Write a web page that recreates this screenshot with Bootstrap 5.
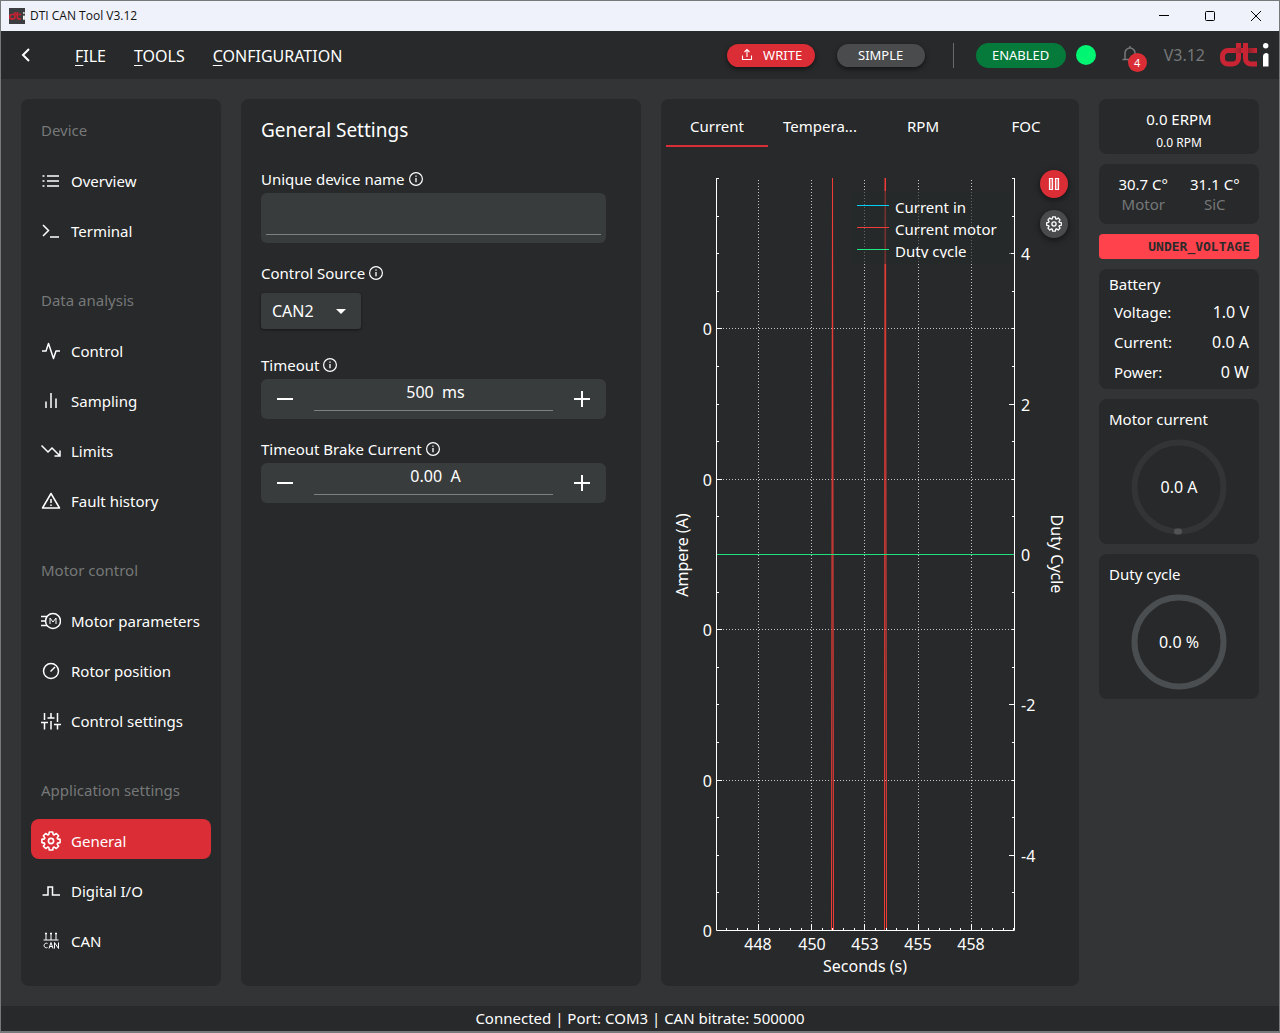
<!DOCTYPE html>
<html lang="en" data-bs-theme="dark">
<head>
<meta charset="utf-8">
<meta name="viewport" content="width=device-width, initial-scale=1">
<title>DTI CAN Tool V3.12</title>
<link href="https://cdn.jsdelivr.net/npm/bootstrap@5.3.0/dist/css/bootstrap.min.css" rel="stylesheet">
<style>
:root{--panel:#27292a;--canvas:#333436;--field:#393c3d;--red:#da2d36;--muted:#767879}
body{font-family:"Noto Sans","DejaVu Sans",sans-serif;font-size:15px;line-height:20px;color:#fff;background:var(--canvas)}
svg{flex:none;display:block}
.ico{fill:none;stroke:currentColor;stroke-width:1.5}
.app-window{min-height:100vh;border:1px solid #77787a;border-bottom-width:2px}
.title-strip{height:30px;background:#eff2fa;color:#111;font-family:"Open Sans","Noto Sans",sans-serif;font-size:12px;padding:0 0 0 8px}
.title-strip .win-btn{border:0;background:none;color:#000;width:46px;height:30px;padding:0;display:flex;align-items:center;justify-content:center}
.title-strip .app-name{padding-left:5px}
.topbar{height:48px;background:var(--panel);padding:0 10px 0 14px}
.back-btn{border:0;background:none;color:#fff;padding:4px;margin-right:40px}
.menu-link{color:#fff;text-decoration:none;font-size:16px}
.menu-gap{gap:28px;padding-top:1px}
.menu-link u{text-underline-offset:3px}
.pill{border:0;border-radius:13px;color:#fff;font-size:13px;line-height:23px;height:23px;width:88px;padding:0;box-shadow:0 2px 5px #0008}
.pill-write{background:var(--red);margin-right:22px}
.pill-simple{background:#4a4b4c}
.pill-on{background:#057a3a;width:90px;height:25px;line-height:25px;box-shadow:none;margin-right:10px}
.rule-v{width:1px;height:25px;background:#67696a;margin:0 22px 0 28px}
.dot-ok{width:20px;height:20px;border-radius:50%;background:#00f573;margin-right:26px}
.bell-btn{border:0;background:none;color:#77797a;padding:0;width:18px;height:20px;margin-right:24px}
.bell-count{left:6px;top:8px;width:19px;height:19px;border-radius:50%;background:var(--red);color:#fff;font-size:11px;line-height:19px}
.ver{color:var(--muted);font-size:16px;margin-right:15px}
.work{padding:20px;gap:20px}
.panel{background:var(--panel);border-radius:8px}
.side{flex:0 0 200px;padding:10px 10px 25px}
.side-head{color:var(--muted);height:40px;line-height:42px;padding-left:10px;margin:0 0 10px;font-size:15px;font-weight:400}
.side-list{display:flex;flex-direction:column;gap:10px;margin-bottom:30px}
.side-list:last-child{margin-bottom:0}
.side-link{display:flex;align-items:center;gap:10px;height:40px;padding:3px 10px 0;border-radius:8px;color:#fff;text-decoration:none}
.side-link.active{background:var(--red)}
.settings{flex:0 0 400px;padding:19px 35px 20px 20px}
.settings h1{font-size:19px;line-height:24px;margin:0 0 25px;font-weight:400}
.field-label{height:24px;display:flex;align-items:center;gap:3px;margin-bottom:2px;padding-bottom:1px}
.field-box{background:var(--field);border-radius:6px;padding:5px}
.field-box input,.stepper input{border:0;border-bottom:1px solid #7c8080;background:none;color:#fff;border-radius:0;outline:0}
.field-box input{display:block;width:100%;height:37px;margin-bottom:3px}
.mb-field{margin-bottom:18px}
.source-wrap{width:100px;height:36px;margin-bottom:24px;margin-top:8px}
.source-wrap select{appearance:none;width:100%;height:36px;border:0;border-radius:3px;background:var(--field);color:#fff;font-size:16px;padding:0 11px;box-shadow:0 1px 3px #0007}
.source-wrap::after{content:"";position:absolute;right:15px;top:16px;border:5px solid transparent;border-top-color:#fff;border-bottom:0;pointer-events:none}
.stepper{background:var(--field);border-radius:6px;height:40px;padding:0 7px}
.stepper button{border:0;background:none;color:#fff;width:34px;height:40px;padding:0;display:flex;align-items:center;justify-content:center}
.stepper input{flex:1;min-width:0;height:32px;font-size:16px;text-align:center;padding:0 0 5px 4px;margin:0 12px}
.chart-panel{flex:1 1 418px;min-width:0}
.tab-row{padding:5px 2px 0 5px;gap:1px}
.tab-row .nav-link{flex:1 1 0;color:#fff;background:none;padding:12px 0;height:43px;line-height:20px;border:0;border-bottom:2px solid transparent;border-radius:0;text-align:center}
.tab-row .nav-link.active{border-bottom-color:var(--red)}
.plot{width:100%;height:auto;margin-top:1px}
.plot text{fill:#fff;font-size:16px}
.plot .key text{font-size:15px}
.plot-tools{position:absolute;right:11px;top:71px;display:flex;flex-direction:column;gap:12px}
.round-btn{width:28px;height:28px;border:0;border-radius:50%;padding:0;display:flex;align-items:center;justify-content:center;color:#fff;background:#4a4b4c;box-shadow:0 2px 6px #0008}
.round-btn.hot{background:var(--red)}
.gauges{flex:0 0 160px;display:flex;flex-direction:column;gap:10px}
.speed-box{height:55px;padding-top:10px}
.tiny{font-size:12px;line-height:28px}
.temp-box{height:60px;padding:10px 14px;gap:22px}
.dim{color:var(--muted)}
.fault{background:#ff424c;color:#2c2a2b;border-radius:4px;height:25px;font:bold 13px/26px "DejaVu Sans Mono",monospace;text-align:right;padding-right:9px}
.batt{height:120px;padding:5px 10px 0}
.batt table{width:100%;margin-top:3px}
.batt td,.batt th{height:30px;padding:0 0 0 5px;font-weight:400;font-size:15px}
.batt td{font-size:16px}
.dial-box{height:145px;padding:10px 10px 0}
.dial-box svg{margin:10px auto 0}
.dial-box text{fill:#fff;font-size:16px;text-anchor:middle}
.status{height:25px;line-height:25px;background:var(--panel);text-align:center}
</style>
<script src="https://cdn.jsdelivr.net/npm/bootstrap@5.3.0/dist/js/bootstrap.bundle.min.js"></script>
</head>
<body>
<svg width="0" height="0" class="position-absolute" aria-hidden="true">
  <defs>
    <linearGradient id="fold"><stop offset="0" stop-color="#c92434"/><stop offset=".6" stop-color="#7d2029"/><stop offset="1" stop-color="#c92434"/></linearGradient>
    <symbol id="i-info" viewBox="0 0 16 16"><circle cx="8" cy="8" r="6.4" fill="none" stroke="currentColor" stroke-width="1.2"/><path d="M8 7v4.2M8 4.4v1.3" fill="none" stroke="currentColor" stroke-width="1.3"/></symbol>
    <symbol id="i-gear" viewBox="0 0 20 20"><path d="M8.3 1h3.4l.5 2.5 1 .4 2.1-1.4 2.3 2.3-1.4 2.1.4 1 2.5.5v3.2l-2.5.5-.4 1 1.4 2.1-2.3 2.3-2.1-1.4-1 .4-.5 2.5H8.3l-.5-2.5-1-.4-2.1 1.4-2.3-2.3 1.4-2.1-.4-1-2.5-.5V8.4l2.5-.5.4-1-1.4-2.1 2.3-2.3 2.1 1.4 1-.4z" fill="none" stroke="currentColor" stroke-width="1.6" stroke-linejoin="round"/><circle cx="10" cy="10" r="2.6" fill="none" stroke="currentColor" stroke-width="1.6"/></symbol>
    <symbol id="i-dti" viewBox="0 0 49 24">
      <path d="M18.500 0v15a6 6 0 0 1-6 6H8a5.500 5.500 0 0 1-5.500-5.500V13A5.500 5.500 0 0 1 8 7.500h10" fill="none" stroke="#c92434" stroke-width="5"/>
      <path d="M21 7.500h16M25.500 0v15.500a5.500 5.500 0 0 0 5.500 5.500h6" fill="none" stroke="#c92434" stroke-width="5"/>
      <path d="M13 5h8v5h-8zM28 5h8v5h-8z" fill="url(#fold)"/>
      <path d="M43 13a3 3 0 0 1 5.500-1.500V23.500H43z" fill="currentColor"/><circle cx="45.700" cy="2.700" r="2.700" fill="currentColor"/>
    </symbol>
  </defs>
</svg>
<div class="app-window d-flex flex-column">
  <div class="title-strip d-flex align-items-center">
    <svg width="16" height="16" viewBox="0 0 16 16" color="#fff"><path fill="#3c3d40" d="M0 0h16v16H0z"/><use href="#i-dti" x="0" y="4" width="16" height="8"/></svg>
    <span class="app-name me-auto">DTI CAN Tool V3.12</span>
    <button class="win-btn" aria-label="Minimize"><svg width="10" height="10" viewBox="0 0 10 10"><path d="M0 4.500h10" stroke="#000"/></svg></button>
    <button class="win-btn" aria-label="Maximize"><svg width="10" height="10" viewBox="0 0 10 10"><rect x=".5" y=".5" width="9" height="9" rx="1" fill="none" stroke="#000"/></svg></button>
    <button class="win-btn" aria-label="Close"><svg width="10" height="10" viewBox="0 0 10 10"><path d="M0 0l10 10M10 0L0 10" stroke="#000"/></svg></button>
  </div>

  <header class="topbar d-flex align-items-center">
    <button class="back-btn" aria-label="Back"><svg width="12" height="16" viewBox="0 0 12 16"><path d="M10 2L4 8l6 6" fill="none" stroke="#fff" stroke-width="2"/></svg></button>
    <nav class="d-flex menu-gap me-auto">
      <a class="menu-link" href="#"><u>F</u>ILE</a>
      <a class="menu-link" href="#"><u>T</u>OOLS</a>
      <a class="menu-link" href="#"><u>C</u>ONFIGURATION</a>
    </nav>
    <button class="pill pill-write d-flex align-items-center justify-content-center gap-2"><svg width="16" height="14" viewBox="0 0 16 14" fill="none" stroke="#fff" stroke-width="1.100"><path d="M8 9V2M5.500 4L8 1.500 10.500 4M3.500 7.500v4h9v-4"/></svg><span>WRITE</span></button>
    <button class="pill pill-simple">SIMPLE</button>
    <span class="rule-v"></span>
    <button class="pill pill-on">ENABLED</button>
    <span class="dot-ok"></span>
    <button class="bell-btn position-relative" aria-label="Notifications"><svg width="16" height="18" viewBox="0 0 16 18" fill="none" stroke="currentColor" stroke-width="1.500"><path d="M.5 13.500h15M3 13.500V7a5 5 0 0 1 10 0v6.500M8 0v2M6 15.500h4"/></svg><span class="bell-count position-absolute">4</span></button>
    <span class="ver">V3.12</span>
    <svg width="49" height="24" color="#fff" role="img" aria-label="dti"><use href="#i-dti"/></svg>
  </header>

  <main class="work d-flex flex-grow-1">
    <nav class="panel side">
      <h2 class="side-head">Device</h2>
      <div class="side-list">
        <a class="side-link" href="#"><svg class="ico" width="20" height="20"><path d="M6 5h12M6 10h12M6 15h12"/><path d="M1.500 5h2M1.500 10h2M1.500 15h2"/></svg>Overview</a>
        <a class="side-link" href="#"><svg class="ico" width="20" height="20"><path d="M2 4l5.500 5.500L2 15M9 16h9"/></svg>Terminal</a>
      </div>
      <h2 class="side-head">Data analysis</h2>
      <div class="side-list">
        <a class="side-link" href="#"><svg class="ico" width="20" height="20"><path d="M1 10h4l2.500-7.500 5 15L15 10h4" stroke-linejoin="round"/></svg>Control</a>
        <a class="side-link" href="#"><svg class="ico" width="20" height="20"><path d="M5 10.500V17M10 2v15M15 7.500V17"/></svg>Sampling</a>
        <a class="side-link" href="#"><svg class="ico" width="20" height="20"><path d="M.5 4.500L7 11l4-4 8 8M19 9.500V15h-5.500"/></svg>Limits</a>
        <a class="side-link" href="#"><svg class="ico" width="20" height="20"><path d="M10 2.500L18.500 17h-17z" stroke-linejoin="round"/><path d="M10 8v4M10 13.500v1.500"/></svg>Fault history</a>
      </div>
      <h2 class="side-head">Motor control</h2>
      <div class="side-list">
        <a class="side-link" href="#"><svg class="ico" width="20" height="20"><circle cx="12" cy="10" r="7.500"/><path d="M9 13V7l3 4 3-4v6" stroke-width="1"/><path d="M0 5.500h6M0 10h4.500M0 14.500h6"/></svg>Motor parameters</a>
        <a class="side-link" href="#"><svg class="ico" width="20" height="20"><circle cx="10" cy="10" r="7.500"/><path d="M9.500 10.500L14 6"/></svg>Rotor position</a>
        <a class="side-link" href="#"><svg class="ico" width="20" height="20"><path d="M3.500 2v7M3.500 12v6.500M0 11.500h7M10 2v5M10 10v8.500M6.500 7h7M16.500 2v9M16.500 14v4.500M13 13.500h7"/></svg>Control settings</a>
      </div>
      <h2 class="side-head">Application settings</h2>
      <div class="side-list">
        <a class="side-link active" href="#"><svg width="20" height="20"><use href="#i-gear"/></svg>General</a>
        <a class="side-link" href="#"><svg class="ico" width="20" height="20"><path d="M1.500 14H7V6h4.500v8H19"/></svg>Digital I/O</a>
        <a class="side-link" href="#"><svg class="ico" width="20" height="20"><path d="M2.500 9h15M5 2v7M10 2v7M15 2v7" stroke-width="1"/><path d="M4 2.500h2M9 2.500h2M14 2.500h2"/><path d="M6.500 12.500a2.300 2.300 0 1 0 0 4M8 17.500l2-6 2 6M8.700 15.500h2.600M13.500 17.500v-6l4 6v-6" stroke-width="1"/></svg>CAN</a>
      </div>
    </nav>

    <section class="panel settings">
      <h1>General Settings</h1>
      <label class="field-label" for="dev-name">Unique device name <svg width="16" height="16"><use href="#i-info"/></svg></label>
      <div class="field-box mb-field"><input id="dev-name" type="text"></div>
      <label class="field-label" for="source">Control Source <svg width="16" height="16"><use href="#i-info"/></svg></label>
      <div class="source-wrap position-relative"><select id="source"><option>CAN2</option><option>CAN1</option></select></div>
      <label class="field-label" for="timeout">Timeout <svg width="16" height="16"><use href="#i-info"/></svg></label>
      <div class="stepper d-flex mb-field">
        <button aria-label="Decrease timeout"><svg width="16" height="16"><path d="M0 8h16" stroke="#fff" stroke-width="2"/></svg></button>
        <input id="timeout" type="text" value="500  ms">
        <button aria-label="Increase timeout"><svg width="16" height="16"><path d="M0 8h16M8 0v16" stroke="#fff" stroke-width="2"/></svg></button>
      </div>
      <label class="field-label" for="brake">Timeout Brake Current <svg width="16" height="16"><use href="#i-info"/></svg></label>
      <div class="stepper d-flex">
        <button aria-label="Decrease brake current"><svg width="16" height="16"><path d="M0 8h16" stroke="#fff" stroke-width="2"/></svg></button>
        <input id="brake" type="text" value="0.00  A">
        <button aria-label="Increase brake current"><svg width="16" height="16"><path d="M0 8h16M8 0v16" stroke="#fff" stroke-width="2"/></svg></button>
      </div>
    </section>

    <section class="panel chart-panel position-relative">
      <div class="nav tab-row flex-nowrap" role="tablist">
        <button class="nav-link active" role="tab">Current</button>
        <button class="nav-link" role="tab">Tempera...</button>
        <button class="nav-link" role="tab">RPM</button>
        <button class="nav-link" role="tab">FOC</button>
      </div>
      <svg class="plot" viewBox="0 0 418 836">
        <clipPath id="legend-clip"><rect x="190" y="43" width="155" height="67"/></clipPath>
        <g stroke="#c4c5c6" stroke-dasharray="1 2">
          <path d="M97.500 32v750M150.500 32v750M203.500 32v750M257.500 32v750M310.500 32v750"/>
          <path d="M56 180.500h297M56 331.500h297M56 481.500h297M56 632.500h297"/>
        </g>
        <g stroke="#f03d38">
          <path d="M170.500 782.500L171.500 30M172.500 782.500L171.500 30"/>
          <path d="M223.500 782.500L224 30M225.500 782.500L224.500 30"/>
        </g>
        <g id="ticks" stroke="#fff"></g>
        <path d="M56 406.500h297" stroke="#1fe07c"/>
        <path d="M55.500 30v752.500h298V30" fill="none" stroke="#fff"/>
        <rect x="190" y="43" width="160" height="73" fill="#27292a" fill-opacity=".6"/>
        <path d="M196 57.500h32" stroke="#00d0f5"/><path d="M196 79.500h32" stroke="#f03d38"/><path d="M196 101.500h32" stroke="#1fe987"/>
        <g class="key" clip-path="url(#legend-clip)"><text x="234" y="65">Current in</text><text x="234" y="87">Current motor</text><text x="234" y="109">Duty cycle</text></g>
        <g text-anchor="end"><text x="51" y="187">0</text><text x="51" y="338">0</text><text x="51" y="488">0</text><text x="51" y="639">0</text><text x="51" y="789">0</text></g>
        <g><text x="360" y="112">4</text><text x="360" y="263">2</text><text x="360" y="413">0</text><text x="360" y="563">-2</text><text x="360" y="714">-4</text></g>
        <g text-anchor="middle">
          <text x="97" y="802">448</text><text x="151" y="802">450</text><text x="204" y="802">453</text><text x="257" y="802">455</text><text x="310" y="802">458</text>
          <text x="204" y="824">Seconds (s)</text>
          <text transform="translate(27 407) rotate(-90)">Ampere (A)</text>
          <text transform="translate(390 406) rotate(90)">Duty Cycle</text>
        </g>
      </svg>
      <div class="plot-tools">
        <button class="round-btn hot" aria-label="Pause"><svg width="12" height="14" fill="#ffffff55" stroke="#fff" stroke-width="1.200"><path d="M1.500 1.500h3v11h-3zM7.500 1.500h3v11h-3z"/></svg></button>
        <button class="round-btn" aria-label="Plot settings"><svg width="16" height="16"><use href="#i-gear"/></svg></button>
      </div>
    </section>

    <aside class="gauges">
      <div class="panel speed-box text-center"><div>0.0 ERPM</div><div class="tiny">0.0 RPM</div></div>
      <div class="panel temp-box d-flex justify-content-center text-center">
        <div>30.7 C°<div class="dim">Motor</div></div>
        <div>31.1 C°<div class="dim">SiC</div></div>
      </div>
      <div class="fault">UNDER_VOLTAGE</div>
      <div class="panel batt">
        <div>Battery</div>
        <table>
          <tr><th scope="row">Voltage:</th><td class="text-end">1.0 V</td></tr>
          <tr><th scope="row">Current:</th><td class="text-end">0.0 A</td></tr>
          <tr><th scope="row">Power:</th><td class="text-end">0 W</td></tr>
        </table>
      </div>
      <div class="panel dial-box">
        <div>Motor current</div>
        <svg width="96" height="96"><circle cx="48" cy="48" r="44.500" fill="none" stroke="#333436" stroke-width="6"/><path d="M46 92.500h2" stroke="#505456" stroke-width="6" stroke-linecap="round"/><text x="48" y="54">0.0 A</text></svg>
      </div>
      <div class="panel dial-box">
        <div>Duty cycle</div>
        <svg width="96" height="96"><circle cx="48" cy="48" r="44.500" fill="none" stroke="#4b4e50" stroke-width="6"/><text x="48" y="54">0.0 %</text></svg>
      </div>
    </aside>
  </main>
  <footer class="status">Connected | Port: COM3 | CAN bitrate: 500000</footer>
</div>
<script>
// Axis ticks: x axis along the bottom, y axes on both sides
let d = '';
for (let i = -3; i <= 24; i++) {
  const x = Math.round(97 + i * 10.64) + .5;
  d += `M${x} 782v${i % 5 === 0 ? -6 : -2}`;
}
for (let i = 1; i <= 20; i++) {
  const y = Math.round(782 - i * 37.6) + .5;
  d += `M56 ${y}h${i % 4 === 0 && i < 20 ? 5 : 2}M353 ${y}h${i % 4 === 2 ? -5 : -2}`;
}
document.getElementById('ticks').innerHTML = `<path d="${d}"/>`;
</script>
</body>
</html>
